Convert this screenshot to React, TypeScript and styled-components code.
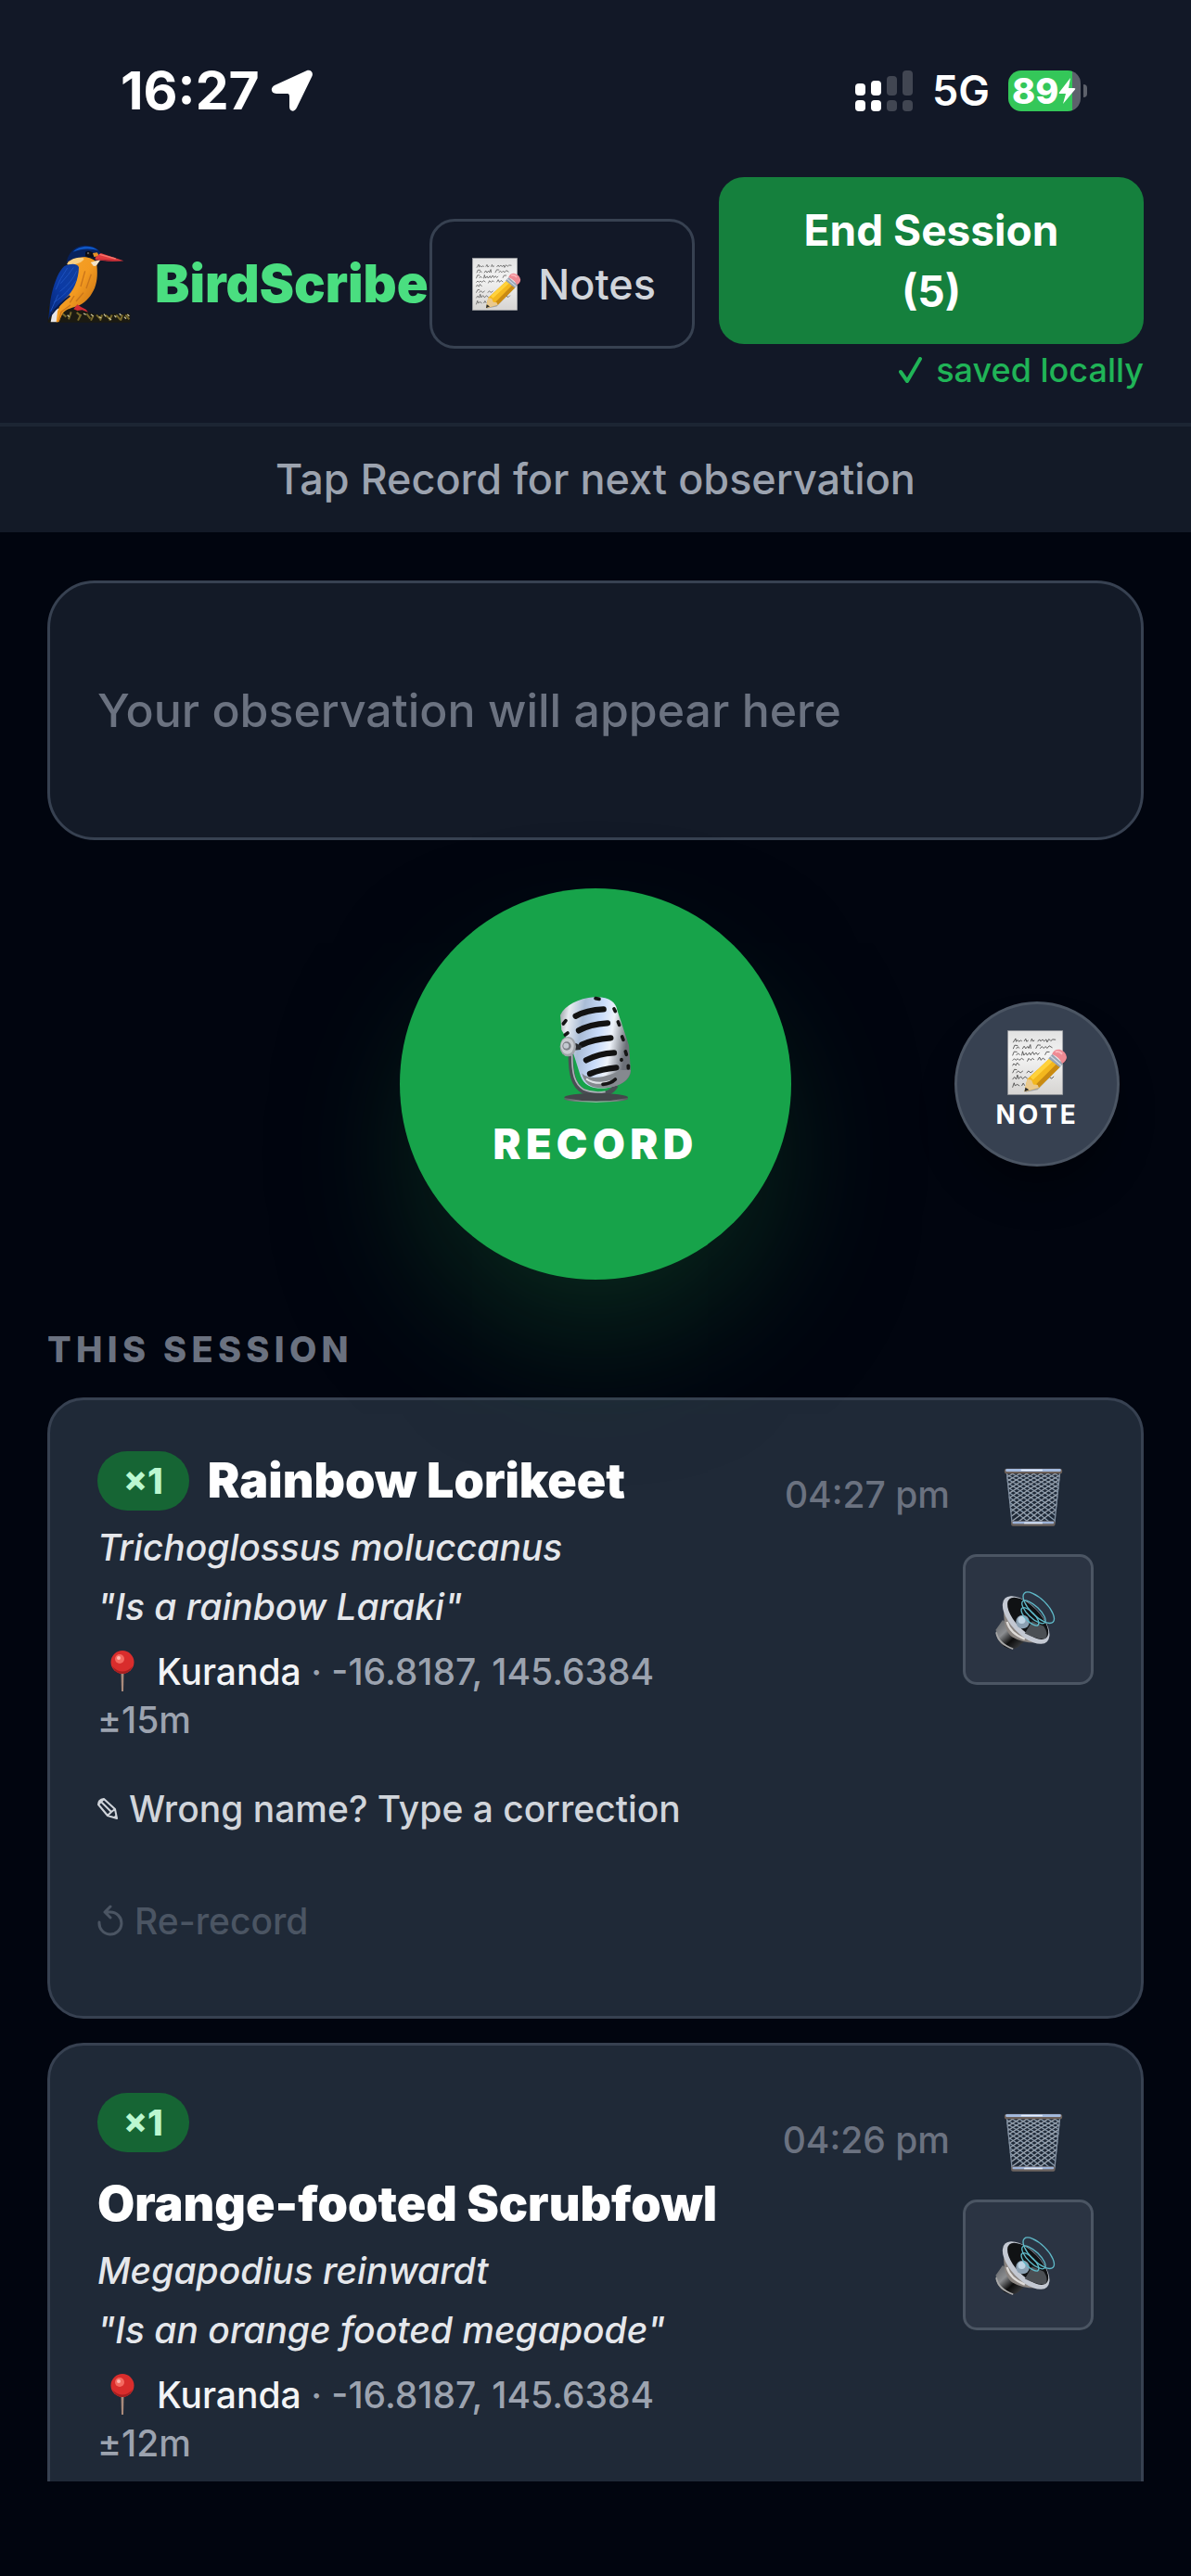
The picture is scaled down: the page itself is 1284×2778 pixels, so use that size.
import React from 'react';
import styled, { createGlobalStyle } from 'styled-components';

interface Observation {
  name: string;
  scientific: string;
  heard: string;
  place: string;
  coords: string;
  accuracy: string;
  time: string;
  count: number;
}

const observations: Observation[] = [
  {
    name: 'Rainbow Lorikeet',
    scientific: 'Trichoglossus moluccanus',
    heard: 'Is a rainbow Laraki',
    place: 'Kuranda',
    coords: '-16.8187, 145.6384',
    accuracy: '±15m',
    time: '04:27 pm',
    count: 1,
  },
  {
    name: 'Orange-footed Scrubfowl',
    scientific: 'Megapodius reinwardt',
    heard: 'Is an orange footed megapode',
    place: 'Kuranda',
    coords: '-16.8187, 145.6384',
    accuracy: '±12m',
    time: '04:26 pm',
    count: 1,
  },
];

const GlobalStyle = createGlobalStyle`
  * {
    box-sizing: border-box;
  }

  body {
    margin: 0;
    background: #01050f;
    color: #fff;
    font-family: Inter, "Liberation Sans", sans-serif;
  }

  button {
    font-family: inherit;
    cursor: pointer;
  }

  svg {
    display: block;
    flex: none;
  }
`;

// ---------- page frame ----------

const Page = styled.div`
  display: flex;
  flex-direction: column;
  height: 100vh;
  padding-bottom: 102px;
  overflow: hidden;
`;

const TopArea = styled.header`
  flex: none;
  background: #121827;
  border-bottom: 4px solid #1c2533;
`;

const StatusBar = styled.div`
  display: flex;
  justify-content: space-between;
  align-items: center;
  height: 191px;
  padding: 4px 112px 0 130px;
`;

const StatusGroup = styled.div<{ $gap: number }>`
  display: flex;
  align-items: center;
  gap: ${(props) => props.$gap}px;
`;

const Clock = styled.span`
  font-size: 57px;
  font-weight: 700;
`;

const Network = styled.span`
  font-size: 45px;
  font-weight: 600;
`;

const Battery = styled.div`
  display: flex;
  align-items: center;
  gap: 3px;
`;

const BatteryBody = styled.div`
  display: flex;
  align-items: center;
  width: 78px;
  height: 44px;
  padding-left: 4px;
  border-radius: 14px;
  background: linear-gradient(to right, #34c759 89%, #5d616b 89%);
  font-size: 38px;
  font-weight: 800;
`;

const BatteryTip = styled.div`
  width: 4px;
  height: 14px;
  border-radius: 0 4px 4px 0;
  background: #5d616b;
`;

const Toolbar = styled.div`
  display: flex;
  align-items: center;
  padding: 0 51px 35px;
`;

const Brand = styled.div`
  display: flex;
  flex: 1;
  align-items: center;
  gap: 26px;
  min-width: 0;
`;

const BrandName = styled.h1`
  margin: 0;
  color: #4ade80;
  font-size: 56px;
  font-weight: 900;
`;

const NotesButton = styled.button`
  display: flex;
  flex: none;
  align-items: center;
  gap: 18px;
  height: 140px;
  margin-right: 26px;
  padding: 0 39px 0 42px;
  border: 3px solid #374151;
  border-radius: 27px;
  background: none;
  color: #d1d5db;
  font-size: 45px;
  font-weight: 500;
`;

const EndColumn = styled.div`
  display: flex;
  flex-direction: column;
  flex: none;
  align-items: flex-end;
  gap: 6px;
  width: 458px;
`;

const EndButton = styled.button`
  width: 100%;
  padding: 24px 72px;
  border: 0;
  border-radius: 27px;
  background: #15803d;
  color: #fff;
  font-size: 46px;
  font-weight: 700;
  line-height: 66px;
`;

const Saved = styled.span`
  display: flex;
  align-items: center;
  gap: 14px;
  color: #20b457;
  font-size: 36px;
  font-weight: 500;
  line-height: 44px;
`;

const Hint = styled.div`
  flex: none;
  padding: 24px 51px;
  background: #131a27;
  color: #9ca3af;
  font-size: 45px;
  font-weight: 500;
  line-height: 66px;
  text-align: center;
`;

const Main = styled.main`
  flex: 1;
  min-height: 0;
  padding: 52px 51px 0;
  overflow: hidden;
`;

// ---------- recorder ----------

const Transcript = styled.div`
  display: flex;
  align-items: center;
  min-height: 280px;
  padding: 51px;
  border: 3px solid #374151;
  border-radius: 51px;
  background: #131a27;
  color: #6b7280;
  font-size: 50px;
  font-weight: 500;
`;

const Recorder = styled.section`
  display: grid;
  grid-template-columns: 1fr auto 1fr;
  align-items: center;
  margin-top: 52px;
  padding: 0 26px;
`;

const RoundButton = styled.button`
  display: flex;
  flex-direction: column;
  align-items: center;
  justify-content: center;
  padding: 0;
  border: 0;
  border-radius: 50%;
  color: #fff;
  font-weight: 800;
`;

const RecordButton = styled(RoundButton)`
  position: relative;
  grid-column: 2;
  gap: 12px;
  width: 422px;
  height: 422px;
  background: #17a34a;
  box-shadow: 0 75px 150px -24px rgba(20, 83, 45, 0.5);
  font-size: 45px;
  font-weight: 900;
  line-height: 63px;
  letter-spacing: 0.12em;
`;

const NoteButton = styled(RoundButton)`
  justify-self: end;
  width: 178px;
  height: 178px;
  padding-bottom: 6px;
  border: 3px solid #4b5563;
  background: #374151;
  box-shadow: 0 30px 45px -9px rgba(0, 0, 0, 0.4);
  font-size: 28px;
  font-weight: 700;
  line-height: 40px;
  letter-spacing: 0.1em;
`;

// ---------- session list ----------

const SectionTitle = styled.h2`
  margin: 50px 0 26px;
  color: #6b7280;
  font-size: 38px;
  font-weight: 800;
  line-height: 51px;
  letter-spacing: 0.14em;
`;

const List = styled.div`
  display: flex;
  flex-direction: column;
  gap: 26px;
`;

const Card = styled.article`
  display: flex;
  align-items: flex-start;
  padding: 51px;
  border: 3px solid #374151;
  border-radius: 39px;
  background: #1f2937;
  font-size: 39px;
  font-weight: 500;
  line-height: 52px;
`;

const CardBody = styled.div`
  flex: 1;
  min-width: 0;
`;

const TitleRow = styled.div`
  display: flex;
  flex-wrap: wrap;
  align-items: center;
  gap: 20px;
`;

const Count = styled.span`
  padding: 0 28px;
  border-radius: 32px;
  background: #166534;
  color: #bbf7d0;
  font-size: 38px;
  font-weight: 800;
  line-height: 64px;
`;

const BirdName = styled.h3`
  margin: 0;
  font-size: 52px;
  font-weight: 900;
  line-height: 72px;
`;

const Line = styled.p`
  margin: 10px 0 0;
  color: #e5e7eb;
  font-style: italic;

  & + & {
    margin-top: 12px;
  }
`;

const Location = styled.p`
  margin: 18px 0 0;
  color: #9ca3af;
`;

const PinSlot = styled.span`
  display: inline-block;
  width: 64px;
  padding-left: 14px;
  vertical-align: -8px;
`;

const Place = styled.span`
  color: #f3f4f6;
`;

const TextButton = styled.button<{ $faded?: boolean }>`
  display: flex;
  align-items: center;
  gap: 12px;
  height: 104px;
  margin-top: 17px;
  padding: 0;
  border: 0;
  background: none;
  color: ${(props) => (props.$faded ? '#4b5563' : '#d1d5db')};
  font-size: 39px;
  font-weight: 500;
`;

const Time = styled.time`
  flex: none;
  margin: 25px 14px 0 44px;
  color: #6b7280;
`;

const CardActions = styled.div`
  display: flex;
  flex-direction: column;
  flex: none;
  gap: 8px;
  width: 141px;
`;

const IconButton = styled.button<{ $framed?: boolean }>`
  display: flex;
  align-items: center;
  justify-content: center;
  height: ${(props) => (props.$framed ? 141 : 107)}px;
  padding: ${(props) => (props.$framed ? '0 6px 0 0' : '0 0 0 10px')};
  border: ${(props) => (props.$framed ? '3px solid #4b5563' : '0')};
  border-radius: 15px;
  background: ${(props) => (props.$framed ? '#2b3443' : 'none')};
`;

// ---------- drawings ----------

const ArrowIcon = () => (
  <svg width="46" height="46" viewBox="0 0 46 46" aria-hidden="true">
    <path
      d="M39 1C43 0 46 3 44.500 7L28 41C25 47 20 45 20 40V29C20 26.500 19 26 17 26H6C0 26 -1 20 4 17Z"
      fill="#fff"
    />
  </svg>
);

const SignalIcon = () => (
  <svg width="63" height="44" viewBox="0 0 63 44" aria-hidden="true">
    <g fill="#fff">
      <rect x="0" y="14" width="11" height="13" rx="4" />
      <rect x="0" y="32" width="11" height="12" rx="4" />
      <rect x="17" y="11" width="11" height="16" rx="4" />
      <rect x="17" y="32" width="11" height="12" rx="4" />
    </g>
    <g fill="#414652">
      <rect x="34" y="6" width="11" height="21" rx="4" />
      <rect x="34" y="32" width="11" height="12" rx="4" />
      <rect x="51" y="0" width="11" height="27" rx="4" />
      <rect x="51" y="32" width="11" height="12" rx="4" />
    </g>
  </svg>
);

const BoltIcon = () => (
  <svg width="19" height="28" viewBox="0 0 19 28" aria-hidden="true">
    <path d="M13 0 1 15.500Q0 17 2 17H8L5 28 18 12.500Q19 11 17 11H11Z" fill="#fff" />
  </svg>
);

const Kingfisher = () => (
  <svg width="90" height="84" viewBox="63 75 270 252" role="img" aria-label="Kingfisher">
    <defs>
      <linearGradient id="belly" x1="0" y1="0" x2="1" y2="1">
        <stop offset="0" stopColor="#f7a52c" />
        <stop offset="0.5" stopColor="#f39a20" />
        <stop offset="1" stopColor="#b8640f" />
      </linearGradient>
      <linearGradient id="wing" x1="1" y1="0" x2="0" y2="1">
        <stop offset="0" stopColor="#123f9c" />
        <stop offset="0.5" stopColor="#0b3aa5" />
        <stop offset="1" stopColor="#06246e" />
      </linearGradient>
    </defs>
    <path d="M65 275 72 270 92 300 110 284 130 279 160 285 190 292 214 298 230 302 250 297 262 303 280 296 300 302 316 297 331 298V326H65Z" fill="#1b1a12" />
    <path
      d="M112 298l12 10M140 292l-8 24M158 294l14 12M172 300l-10 20M190 298l12 16M212 304l-8 16M222 302l14 14M240 302l-6 18M252 303l16 14M272 302l-8 18M286 302l14 16M306 302l-6 18M316 302l12 14"
      stroke="#77682a"
      strokeWidth="6"
    />
    <path
      d="M128 302l6 6M180 297l8 4M204 300l8 6M230 308l8 4M246 299l6 8M262 312l8 6M280 304l6 6M296 298l6 6M312 308l6 6M322 300l6 6"
      stroke="#c4bd94"
      strokeWidth="4"
    />
    <path d="M80 292 100 280 103 302 96 325H74Z" fill="#e8e6e8" />
    <path d="M130 125C165 108 200 112 222 130C226 165 226 190 216 215C205 240 190 258 168 270C145 280 125 280 112 298L100 325H92L96 290 120 230Z" fill="url(#belly)" />
    <path d="M138 270 108 292 100 322M185 160l-14 50M205 170l-16 46M180 230l-24 28M150 240l-14 22" stroke="#c9741a" strokeWidth="4" fill="none" />
    <path d="M126 138C142 114 172 112 182 120C176 134 150 142 126 138Z" fill="#f8cf83" />
    <path d="M203 132 236 122 222 142Q212 148 208 138Z" fill="#f4e3c6" />
    <path d="M124 136C128 104 152 75 184 77C212 77 230 88 237 104L214 116C194 112 172 114 156 118Q138 122 124 136Z" fill="#07215c" />
    <path d="M146 98C162 78 206 72 228 94C208 88 180 84 146 98Z" fill="#0f56c4" />
    <path d="M186 98Q198 92 210 100L214 114Q198 116 186 112Z" fill="#0a0d18" />
    <circle cx="197" cy="104" r="6" fill="#1b1512" />
    <circle cx="195" cy="102" r="2" fill="#c8c8d0" />
    <path d="M210 102 224 100 232 112 214 114Z" fill="#e58f25" />
    <path d="M218 116 236 102 310 127 272 129 218 124Z" fill="#e23b3e" />
    <path d="M218 120 310 127 262 128Z" fill="#a82532" />
    <path d="M232 106 284 120" stroke="#f4756c" strokeWidth="4" />
    <path d="M118 144C140 134 162 136 165 148C164 190 148 226 120 250L78 292 66 318C70 290 70 262 78 230C88 192 100 160 118 144Z" fill="url(#wing)" />
    <path d="M148 148Q132 172 106 200M158 160Q142 196 104 226M156 190Q128 232 84 262M128 150Q104 184 90 220M98 236 74 290" stroke="#1d51bd" strokeWidth="3" fill="none" />
    <path d="M136 240Q104 264 72 306" stroke="#051a4e" strokeWidth="5" fill="none" />
    <path d="M148 283 160 268 172 276 188 284 195 293 176 286 160 288Z" fill="#d32a32" />
  </svg>
);

const MemoIcon = ({ width }: { width: number }) => (
  <svg width={width} height={Math.round(width * 1.09)} viewBox="318 206 200 218" aria-hidden="true">
    <defs>
      <linearGradient id="paper" x1="0" y1="0" x2="0" y2="1">
        <stop offset="0" stopColor="#e2e2e2" />
        <stop offset="0.4" stopColor="#f3f3f3" />
        <stop offset="1" stopColor="#d6d4d2" />
      </linearGradient>
    </defs>
    <rect x="323" y="211" width="179" height="208" fill="url(#paper)" stroke="#9c9ea2" strokeWidth="2" />
    <g fill="none" stroke="#444" strokeWidth="2.500">
      <path d="M340 249l8-13 2 10 5-5 4 5 6-4 4 3M376 245l5-8 3 9 6-4M398 246l3-9 4 8 5-3M420 246l6-7 4 6 6-6 5 6 7-6 3 9 6-10 6 6 6-5 10 1" />
      <path d="M340 270l5-12 10 1M350 270l5-7 6 5M370 270l6-9 5 8 6-7 4 6 5-12 2 13M414 269l6-12 10 1M428 269l6-7 6 6 6-6 5 6 7-8 10 6" />
      <path d="M338 292l5-13 10 1M350 291l6-7 6 6M368 292l3-14 4 13 7-8 4 8 7-9 4 8 7-10 5 9 6-7 5 7 6-6M444 290l5-10 10 0" />
      <path d="M338 308l6-6 5 5 6-5 5 5 8-6 7 5M386 311l5-10 6 6 7-6 5 5M420 307l6-10 5 10 6-7 8 6" />
      <path d="M338 325l4-7 7 6 4-9 8 9" />
      <path d="M338 349l6-12 8 1M350 349l6-7 8 6 8-6M384 349l6-7 7 6 8-6" />
      <path d="M338 370l6-8 6 7 4-14 4 13 7-8 6 8 8-7 8 6M450 367l8-5 8 5 7-7" />
      <path d="M338 396l5-15 3 9 8-4 7 5M368 391l5-9 5 8" />
    </g>
    <path d="M378 412 420 404 516 306 508 296 440 370Z" fill="#000" opacity="0.25" />
    <path d="M377 410 386 369 460 300 492 330 424 397Z" fill="#f3b71d" />
    <path d="M396 362 460 300 471 309 405 371Z" fill="#ffd23c" />
    <path d="M482 319 492 330 424 397 416 385Z" fill="#c98a12" />
    <path d="M377 410 386 369 400 372 406 386 420 388 424 397Z" fill="#eac98e" />
    <path d="M377 410 380 396 392 404Z" fill="#2b2b2b" />
    <path d="M455 301 468 287 502 318 492 330Z" fill="#98a4b3" />
    <path d="M462 294 497 324" stroke="#d4dbe4" strokeWidth="4" />
    <path d="M467 287Q475 269 492 272Q512 278 515 297Q514 311 500 318Q494 300 467 287Z" fill="#ee8a93" />
    <path d="M478 280Q490 276 500 287" stroke="#fbb8bd" strokeWidth="6" fill="none" />
  </svg>
);

const MicIcon = () => (
  <svg width="80" height="116" viewBox="600 400 240 348" aria-hidden="true">
    <defs>
      <linearGradient id="chrome" x1="0" y1="0" x2="1" y2="0.2">
        <stop offset="0" stopColor="#8e9298" />
        <stop offset="0.15" stopColor="#e8ecf1" />
        <stop offset="0.35" stopColor="#a9bcd6" />
        <stop offset="0.6" stopColor="#c9dcfb" />
        <stop offset="0.78" stopColor="#eef3fa" />
        <stop offset="1" stopColor="#6c7078" />
      </linearGradient>
      <linearGradient id="foot" x1="0" y1="0" x2="1" y2="0">
        <stop offset="0" stopColor="#5a5d61" />
        <stop offset="0.5" stopColor="#b9bbbf" />
        <stop offset="1" stopColor="#55585c" />
      </linearGradient>
    </defs>
    <path d="M640 590C640 650 648 690 680 708Q712 724 752 716Q776 710 786 690" fill="none" stroke="#4a4e54" strokeWidth="16" />
    <path d="M644 590C644 650 652 686 682 703Q712 716 752 710" fill="none" stroke="#aeb3ba" strokeWidth="5" />
    <ellipse cx="722" cy="728" rx="103" ry="13" fill="#44474b" />
    <path d="M619 730Q722 752 825 730V734Q810 744 722 744Q630 744 619 734Z" fill="url(#foot)" />
    <path d="M606 462C622 430 664 408 716 404C764 402 786 420 790 446L808 500 828 560 834 644C832 672 806 690 758 698C710 702 684 690 672 660L640 560 610 510Z" fill="url(#chrome)" />
    <path d="M676 650C690 668 740 672 800 640L834 640C830 676 798 692 758 697C712 702 684 690 676 650Z" fill="#85898f" />
    <path d="M690 668Q720 690 770 676" stroke="#dfe3e8" strokeWidth="6" fill="none" />
    <g stroke="#121212" strokeWidth="19" strokeLinecap="round" fill="none">
      <path d="M656 465Q690 446 746 443" />
      <path d="M666 512Q700 492 759 488" />
      <path d="M676 558Q712 540 769 536" />
      <path d="M690 608Q730 586 780 584" />
      <path d="M702 652Q740 636 787 632" />
    </g>
    <g stroke="#151515" strokeWidth="11" strokeLinecap="round" fill="none">
      <path d="M616 490 624 480" />
      <path d="M622 526 630 520" />
      <path d="M720 408 732 410" />
      <path d="M780 442 784 450" />
      <path d="M793 484 797 494" />
      <path d="M806 532 810 542" />
      <path d="M817 580 820 590" />
      <path d="M826 626V634" />
      <path d="M804 606V608" />
      <path d="M744 686Q770 684 784 670" />
    </g>
    <path d="M655 552 676 562 672 574 650 576Z" fill="#2b2d31" />
    <ellipse cx="631" cy="564" rx="26" ry="32" fill="#9fa3a8" />
    <ellipse cx="629" cy="562" rx="21" ry="26" fill="#c9ccd1" />
    <circle cx="627" cy="562" r="14" fill="#7d8187" />
    <circle cx="625" cy="561" r="9" fill="#c3c9d0" />
  </svg>
);

// wire strands run corner to corner between the rims of the basket
const strands = Array.from({ length: 15 }, (_, i) => 840 + i * 23);

const BasketIcon = () => (
  <svg width="64" height="65" viewBox="904 304 192 196" aria-hidden="true">
    <clipPath id="basket">
      <path d="M912 322H1088L1070 488H930Z" />
    </clipPath>
    <g clipPath="url(#basket)" fill="none" strokeWidth="4">
      {strands.map((x) => (
        <path key={`r${x}`} d={`M${x - 100} 322Q${x + 40} 396 ${x + 150} 488`} stroke="#8799ab" />
      ))}
      {strands.map((x) => (
        <path key={`l${x}`} d={`M${x + 100} 322Q${x - 30} 396 ${x - 150} 488`} stroke="#9aa3ae" />
      ))}
    </g>
    <path d="M914 324 931 486M1086 324 1069 486" stroke="#7f8d9e" strokeWidth="4" />
    <rect x="906" y="309" width="188" height="17" rx="8" fill="#6b5f58" />
    <rect x="910" y="310" width="180" height="9" rx="4" fill="#a3b9dc" />
    <rect x="960" y="312" width="70" height="5" rx="2" fill="#e6eefb" />
    <rect x="928" y="480" width="143" height="16" rx="6" fill="#6b625e" />
    <rect x="932" y="481" width="135" height="8" rx="4" fill="#9db3d8" />
    <rect x="970" y="484" width="60" height="5" rx="2" fill="#dfe8f6" />
  </svg>
);

const SpeakerIcon = () => (
  <svg width="65" height="64" viewBox="880 710 196 192" aria-hidden="true">
    <defs>
      <linearGradient id="magnet" x1="0" y1="0" x2="1" y2="1">
        <stop offset="0" stopColor="#5c5f63" />
        <stop offset="0.35" stopColor="#8b8d90" />
        <stop offset="0.6" stopColor="#0d0d0d" />
        <stop offset="1" stopColor="#55585c" />
      </linearGradient>
    </defs>
    <path d="M904 806 882 838Q882 872 908 892Q930 906 952 896L984 868Z" fill="url(#magnet)" />
    <path d="M883 846Q890 884 938 900" stroke="#a9a9a9" strokeWidth="5" fill="none" />
    <path d="M908 780Q906 840 936 862Q968 882 1020 880Z" fill="#8a8480" />
    <path d="M918 812Q928 850 976 868" stroke="#dedbd8" strokeWidth="7" fill="none" />
    <ellipse cx="980" cy="806" rx="98" ry="48" transform="rotate(46 980 806)" fill="#c3c8d2" />
    <ellipse cx="986" cy="801" rx="87" ry="39" transform="rotate(46 986 801)" fill="#101214" />
    <path d="M976 850Q1020 872 1044 866Q1054 852 1038 826L1000 810Z" fill="#4b4f54" />
    <circle cx="969" cy="812" r="22" fill="#8ba0b2" />
    <circle cx="966" cy="806" r="12" fill="#bfd4e4" />
    <g fill="none" stroke="#5fb9c8" strokeWidth="4">
      <ellipse cx="993" cy="795" rx="38" ry="15" transform="rotate(46 993 795)" />
      <ellipse cx="1005" cy="780" rx="50" ry="19" transform="rotate(44 1005 780)" />
      <ellipse cx="1021" cy="766" rx="66" ry="27" transform="rotate(45 1021 766)" />
    </g>
  </svg>
);

const PinIcon = () => (
  <svg width="26" height="45" viewBox="0 0 26 45" aria-hidden="true">
    <path d="M11.500 22H14.500L14 44H12Z" fill="#a98a7b" />
    <circle cx="13" cy="12.500" r="12.500" fill="#d92d2c" />
    <path d="M2 17Q13 28 24 17Q20 25 13 25Q6 25 2 17Z" fill="#a51f20" />
    <circle cx="10" cy="9" r="5" fill="#f46a60" />
    <circle cx="9" cy="8" r="2" fill="#ffb8b0" />
  </svg>
);

const CheckIcon = () => (
  <svg width="26" height="29" viewBox="0 0 26 29" aria-hidden="true">
    <path d="M2 16 9 26 23 2" fill="none" stroke="currentColor" strokeWidth="4" strokeLinecap="round" strokeLinejoin="round" />
  </svg>
);

const PencilIcon = () => (
  <svg width="22" height="23" viewBox="0 0 22 23" aria-hidden="true">
    <path
      d="M1 7Q1 2 7 1L19 12 21 22 11 19ZM4 4 15 15M1 7 4 4 7 1M11 19 15 15 19 12"
      fill="none"
      stroke="currentColor"
      strokeWidth="2"
      strokeLinejoin="round"
    />
    <path d="M17 21 21 22 20 18Z" fill="currentColor" />
  </svg>
);

const RedoIcon = () => (
  <svg width="28" height="34" viewBox="0 0 28 34" aria-hidden="true">
    <path
      d="M2 19A12 12 0 1 0 14 8H8M14 2 8 8 14 14"
      fill="none"
      stroke="currentColor"
      strokeWidth="3"
      strokeLinecap="round"
      strokeLinejoin="round"
    />
  </svg>
);

// only the latest observation can still be corrected or recorded again
const ObservationCard: React.FC<{ item: Observation; latest: boolean }> = ({ item, latest }) => {
  return (
    <Card>
      <CardBody>
        <TitleRow>
          <Count>×{item.count}</Count>
          <BirdName>{item.name}</BirdName>
        </TitleRow>
        <Line>{item.scientific}</Line>
        <Line>"{item.heard}"</Line>
        <Location>
          <PinSlot>
            <PinIcon />
          </PinSlot>
          <Place>{item.place}</Place> · {item.coords} {item.accuracy}
        </Location>
        {latest && (
          <>
            <TextButton type="button">
              <PencilIcon />
              Wrong name? Type a correction
            </TextButton>
            <TextButton type="button" $faded>
              <RedoIcon />
              Re-record
            </TextButton>
          </>
        )}
      </CardBody>
      <Time>{item.time}</Time>
      <CardActions>
        <IconButton type="button" aria-label="Delete observation">
          <BasketIcon />
        </IconButton>
        <IconButton type="button" $framed aria-label="Play observation">
          <SpeakerIcon />
        </IconButton>
      </CardActions>
    </Card>
  );
};

const App: React.FC = () => {
  return (
    <Page>
      <GlobalStyle />
      <TopArea>
        <StatusBar>
          <StatusGroup $gap={12}>
            <Clock>16:27</Clock>
            <ArrowIcon />
          </StatusGroup>
          <StatusGroup $gap={20}>
            <SignalIcon />
            <Network>5G</Network>
            <Battery>
              <BatteryBody>
                89
                <BoltIcon />
              </BatteryBody>
              <BatteryTip />
            </Battery>
          </StatusGroup>
        </StatusBar>
        <Toolbar>
          <Brand>
            <Kingfisher />
            <BrandName>BirdScribe</BrandName>
          </Brand>
          <NotesButton type="button">
            <MemoIcon width={54} />
            Notes
          </NotesButton>
          <EndColumn>
            <EndButton type="button">End Session (5)</EndButton>
            <Saved>
              <CheckIcon />
              saved locally
            </Saved>
          </EndColumn>
        </Toolbar>
      </TopArea>
      <Hint>Tap Record for next observation</Hint>
      <Main>
        <Transcript aria-live="polite">Your observation will appear here</Transcript>
        <Recorder>
          <RecordButton type="button">
            <MicIcon />
            RECORD
          </RecordButton>
          <NoteButton type="button">
            <MemoIcon width={66} />
            NOTE
          </NoteButton>
        </Recorder>
        <SectionTitle>THIS SESSION</SectionTitle>
        <List>
          {observations.map((item, index) => (
            <ObservationCard key={item.name} item={item} latest={index === 0} />
          ))}
        </List>
      </Main>
    </Page>
  );
};

export default App;
